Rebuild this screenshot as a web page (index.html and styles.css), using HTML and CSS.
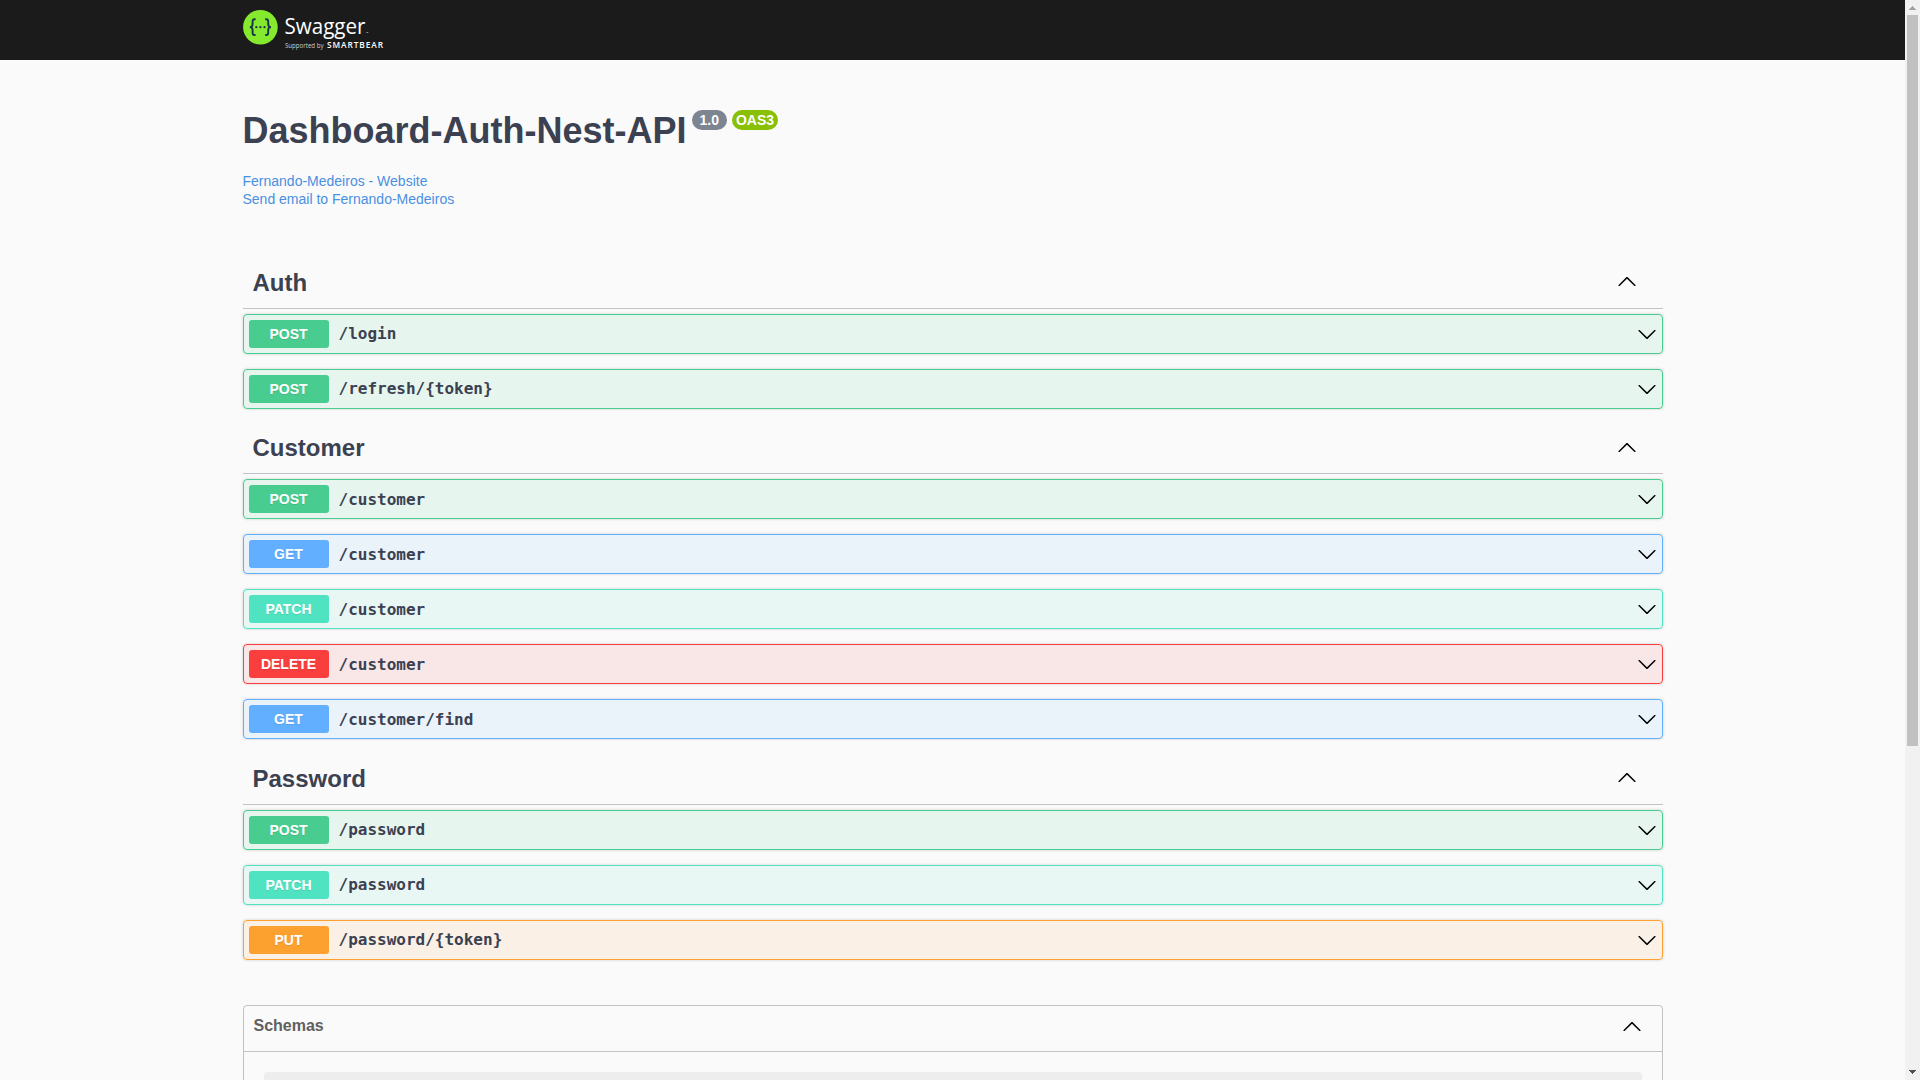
FILE: index.html
```html
<!DOCTYPE html>
<html lang="en">
<head>
<meta charset="utf-8">
<title>Swagger UI</title>
<link rel="stylesheet" href="styles.css">
</head>
<body>
<svg class="defs" width="0" height="0" aria-hidden="true">
  <symbol id="down" viewBox="0 0 20 20"><path d="M17.418 6.109c.272-.268.709-.268.979 0s.271.701 0 .969l-7.908 7.83c-.27.268-.707.268-.979 0l-7.908-7.83c-.27-.268-.27-.701 0-.969.271-.268.709-.268.979 0L10 13.25l7.418-7.141z"/></symbol>
  <symbol id="up" viewBox="0 0 20 20"><path d="M17.418 14.908c.272.268.709.268.979 0s.271-.701 0-.969l-7.908-7.83c-.27-.268-.707-.268-.979 0l-7.908 7.83c-.27.268-.27.701 0 .969.271.268.709.268.979 0L10 7.767l7.418 7.141z"/></symbol>
</svg>
<div class="page">
  <header class="topbar">
    <div class="wrapper">
      <svg class="logo" width="150" height="60" viewBox="0 0 150 60">
        <circle cx="17.4" cy="27.2" r="17.3" fill="#85ea2d"/>
        <g fill="none" stroke="#173647" stroke-width="1.9">
          <path d="M12.6 19.2h-1q-2 0-2 2v3q0 2.700-2.700 2.900q2.700.2 2.700 2.900v3q0 2 2 2h1"/>
          <path d="M22.200 19.200h1q2 0 2 2v3q0 2.700 2.700 2.900q-2.700.2-2.700 2.900v3q0 2-2 2h-1"/>
        </g>
        <g fill="#173647"><circle cx="13.300" cy="27.200" r="1.150"/><circle cx="17.400" cy="27.200" r="1.150"/><circle cx="21.500" cy="27.200" r="1.150"/></g>
        <text class="logo-name" x="41.5" y="34.3" textLength="81" lengthAdjust="spacingAndGlyphs">Swagger</text>
        <text class="logo-mark" x="123" y="34.3">™</text>
        <text class="logo-by" x="42" y="48.4" textLength="38.500" lengthAdjust="spacingAndGlyphs">Supported by</text>
        <text class="logo-brand" x="84" y="48.4" textLength="56">SMARTBEAR</text>
      </svg>
    </div>
  </header>
  <main class="wrapper">
    <section class="info">
      <h1 class="title">Dashboard-Auth-Nest-API <span class="badges"><small class="badge">1.0</small><small class="badge badge-oas">OAS3</small></span></h1>
      <div class="contact"><a>Fernando-Medeiros - Website</a><a>Send email to Fernando-Medeiros</a></div>
    </section>
    <section>
      <h3 class="tag">Auth<svg class="icon"><use href="#up"/></svg></h3>
      <div class="op post"><span class="method">POST</span><span class="path">/login</span><svg class="icon"><use href="#down"/></svg></div>
      <div class="op post"><span class="method">POST</span><span class="path">/refresh/{token}</span><svg class="icon"><use href="#down"/></svg></div>
    </section>
    <section>
      <h3 class="tag">Customer<svg class="icon"><use href="#up"/></svg></h3>
      <div class="op post"><span class="method">POST</span><span class="path">/customer</span><svg class="icon"><use href="#down"/></svg></div>
      <div class="op get"><span class="method">GET</span><span class="path">/customer</span><svg class="icon"><use href="#down"/></svg></div>
      <div class="op patch"><span class="method">PATCH</span><span class="path">/customer</span><svg class="icon"><use href="#down"/></svg></div>
      <div class="op delete"><span class="method">DELETE</span><span class="path">/customer</span><svg class="icon"><use href="#down"/></svg></div>
      <div class="op get"><span class="method">GET</span><span class="path">/customer/find</span><svg class="icon"><use href="#down"/></svg></div>
    </section>
    <section>
      <h3 class="tag">Password<svg class="icon"><use href="#up"/></svg></h3>
      <div class="op post"><span class="method">POST</span><span class="path">/password</span><svg class="icon"><use href="#down"/></svg></div>
      <div class="op patch"><span class="method">PATCH</span><span class="path">/password</span><svg class="icon"><use href="#down"/></svg></div>
      <div class="op put"><span class="method">PUT</span><span class="path">/password/{token}</span><svg class="icon"><use href="#down"/></svg></div>
    </section>
    <section class="models">
      <h4 class="models-head">Schemas<svg class="icon"><use href="#up"/></svg></h4>
      <div class="model"></div>
    </section>
  </main>
</div>
<div class="scrollbar">
  <svg width="15" height="15"><path d="M4 10h7v-1h-1v-1h-1v-1h-1v-1h-1v1h-1v1h-1v1h-1z" fill="#a3a3a3"/></svg>
  <div class="thumb"></div>
  <svg class="arrow-end" width="15" height="15"><path d="M4 5h7v1h-1v1h-1v1h-1v1h-1v-1h-1v-1h-1v-1h-1z" fill="#505050"/></svg>
</div>
</body>
</html>
```
FILE: styles.css
```css
* { box-sizing: border-box; }
html, body { height: 100%; margin: 0; overflow: hidden; }
body { display: flex; background: #fafafa; color: #3b4151; font-family: "Liberation Sans", Arial, sans-serif; }
.defs { position: absolute; }
.page { flex: 1; height: 100%; overflow: hidden; }
.wrapper { width: 1460px; margin: 0 auto; padding: 0 20px; }
.topbar { height: 60px; background: #1b1b1b; }
.logo { display: block; }
.logo text { fill: #fff; font-family: "Open Sans", sans-serif; }
.logo .logo-name { font-size: 22.200px; }
.logo .logo-mark { font-size: 3px; }
.logo .logo-by { font-size: 6.500px; fill: #d0d0d0; }
.logo .logo-brand { font-size: 8.300px; font-weight: 600; }

.info { height: 198.600px; padding-top: 50px; }
.title { display: flex; gap: 5px; margin: 0; font-size: 36px; line-height: 41px; }
.badges { display: flex; gap: 5px; align-items: flex-start; }
.badge { display: block; height: 20px; padding: 2px 8px; border-radius: 57px; background: #7d8492; color: #fff; font-size: 14px; line-height: 16px; }
.badge-oas { padding: 2px 4px; background: #89bf04; }
.contact { display: flex; flex-direction: column; margin-top: 21px; font-size: 14px; line-height: 18px; color: #4990e2; }

.tag { display: flex; align-items: center; justify-content: space-between; height: 50.400px; margin: 0 0 5px; padding: 0 26px .6px 10px; border-bottom: 1px solid rgba(59, 65, 81, .3); font-size: 24px; line-height: 28px; }
.icon { width: 20px; height: 20px; flex: none; fill: #000; }
.tag .icon { margin-bottom: 3px; }
.op { display: flex; align-items: center; height: 40px; margin-bottom: 15px; padding: 5px; border: 1px solid; border-radius: 4px; box-shadow: 0 0 3px rgba(0, 0, 0, .19); }
.method { width: 80px; height: 28px; border-radius: 3px; color: #fff; font-size: 14px; font-weight: 700; line-height: 28px; text-align: center; text-shadow: 0 1px 0 rgba(0, 0, 0, .1); }
.path { flex: 1; padding: 0 10px .4px; font: 600 16px/19px "DejaVu Sans Mono", monospace; }
.post { border-color: #49cc90; background: rgba(73, 204, 144, .1); }
.post .method { background: #49cc90; }
.get { border-color: #61affe; background: rgba(97, 175, 254, .1); }
.get .method { background: #61affe; }
.patch { border-color: #50e3c2; background: rgba(80, 227, 194, .1); }
.patch .method { background: #50e3c2; }
.delete { border-color: #f93e3e; background: rgba(249, 62, 62, .1); }
.delete .method { background: #f93e3e; }
.put { border-color: #fca130; background: rgba(252, 161, 48, .1); }
.put .method { background: #fca130; }

.models { margin-top: 45px; border: 1px solid rgba(59, 65, 81, .3); border-radius: 4px; }
.models-head { display: flex; align-items: center; justify-content: space-between; height: 46px; margin: 0 0 20px; padding: 0 20px 5px 10px; border-bottom: 1px solid rgba(59, 65, 81, .3); color: #606060; font-size: 16px; }
.model { height: 40px; margin: 0 20px; border-radius: 4px; background: rgba(0, 0, 0, .05); }

.scrollbar { display: flex; flex-direction: column; width: 15px; height: 100%; background: #f1f1f1; }
.thumb { width: 11px; height: 731px; margin-left: 2px; background: #c1c1c1; }
.arrow-end { margin-top: auto; }
```
